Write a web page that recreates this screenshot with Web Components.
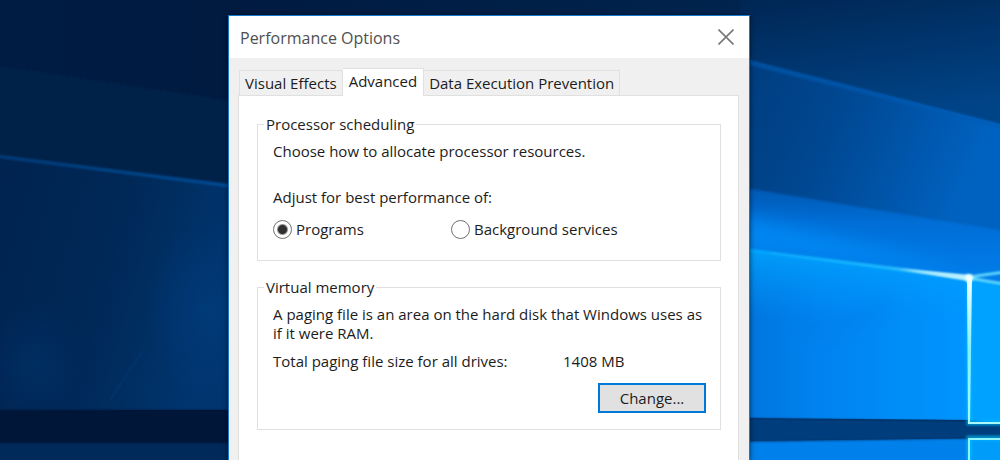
<!DOCTYPE html>
<html lang="en">
<head>
<meta charset="utf-8">
<title>Performance Options</title>
<style>
  html, body {
    height: 100%;
    margin: 0;
    overflow: hidden;
  }

  body {
    font-family: "Open Sans", "Noto Sans", sans-serif;
    font-size: 15px;
    line-height: 19px;
    color: #1c1c1c;
  }

  p {
    margin: 0;
  }

  .spaced {
    margin-top: 27px;
  }
</style>
</head>
<body>
<desktop-wallpaper>
  <dialog-window name="Performance Options">
    <tab-view tabs="Visual Effects,Advanced,Data Execution Prevention" selected="1">
      <group-box name="Processor scheduling">
        <p>Choose how to allocate processor resources.</p>
        <p class="spaced">Adjust for best performance of:</p>
        <radio-choice name="scheduling" options="Programs,Background services"></radio-choice>
      </group-box>
      <group-box name="Virtual memory">
        <p>A paging file is an area on the hard disk that Windows uses as if it were RAM.</p>
        <value-row>
          Total paging file size for all drives:
          <span slot="value">1408 MB</span>
        </value-row>
        <push-button>Change...</push-button>
      </group-box>
    </tab-view>
  </dialog-window>
</desktop-wallpaper>

<script>
// Attach an open shadow root and fill it with markup
const render = (el, html) => {
    let template = document.createElement('template');
    template.innerHTML = html;
    let shadow = el.attachShadow({mode: 'open'});
    shadow.append(template.content.cloneNode(true));
    return shadow;
};

/**
 * DesktopWallpaper
 * I paint the light beams and the window frame of
 * the desktop, and stack my children on top of them.
 */
const wallpaperTemplate = `
<style>
  :host {
    display: grid;
    grid-template-columns: 228fr 522px 250fr;
    grid-template-rows: 15px minmax(0, 1fr);
    height: 100%;
    overflow: hidden;
    background: #002048;
  }
  svg {
    grid-area: 1 / 1 / 3 / 4;
    width: 100%;
    height: 100%;
    min-height: 0;
  }
  slot {
    display: block;
    grid-area: 2 / 2 / 3 / 3;
    z-index: 1;
  }
</style>
<svg viewBox="0 0 1000 460" preserveAspectRatio="none" aria-hidden="true">
  <defs>
    <linearGradient id="sky" x1="0" x2="1" y1="0" y2="0">
      <stop offset="0" stop-color="#001c42"/>
      <stop offset=".23" stop-color="#001a40"/>
      <stop offset=".75" stop-color="#00244e"/>
      <stop offset="1" stop-color="#002b5c"/>
    </linearGradient>
    <linearGradient id="skyRight" x1="0" x2=".3" y1="0" y2="1">
      <stop offset="0" stop-color="#002653"/>
      <stop offset="1" stop-color="#004488"/>
    </linearGradient>
    <linearGradient id="leftLow" x1="0" x2="1" y1="0" y2=".3">
      <stop offset="0" stop-color="#002350"/>
      <stop offset=".5" stop-color="#002856"/>
      <stop offset="1" stop-color="#00356f"/>
    </linearGradient>
    <linearGradient id="beam" x1="0" x2="1" y1="0" y2=".3">
      <stop offset="0" stop-color="#003c7c"/>
      <stop offset=".45" stop-color="#004893"/>
      <stop offset="1" stop-color="#0062c0"/>
    </linearGradient>
    <linearGradient id="bright" x1="0" x2="0" y1="0" y2="1">
      <stop offset="0" stop-color="#0058b2"/>
      <stop offset=".35" stop-color="#006ed6"/>
      <stop offset="1" stop-color="#0080ee"/>
    </linearGradient>
    <linearGradient id="pane" x1="0" x2="1" y1="0" y2="0">
      <stop offset="0" stop-color="#0074dc"/>
      <stop offset=".35" stop-color="#0083f0"/>
      <stop offset="1" stop-color="#0096ff"/>
    </linearGradient>
    <linearGradient id="paneGlow" x1="0" x2="0" y1="0" y2="1">
      <stop offset="0" stop-color="#00a8ff" stop-opacity=".8"/>
      <stop offset=".4" stop-color="#0098ff" stop-opacity="0"/>
    </linearGradient>
    <linearGradient id="leftRay" x1="0" x2="1" y1="0" y2="0">
      <stop offset="0" stop-color="#003e7e"/>
      <stop offset="1" stop-color="#00509c"/>
    </linearGradient>
    <linearGradient id="ray" x1="0" x2="1" y1="0" y2="0">
      <stop offset="0" stop-color="#00a4ff"/>
      <stop offset=".65" stop-color="#20bcff"/>
      <stop offset=".85" stop-color="#7cdcff"/>
      <stop offset="1" stop-color="#e8ffff"/>
    </linearGradient>
    <linearGradient id="frame" x1="0" x2="0" y1="0" y2="1">
      <stop offset="0" stop-color="#f4ffff"/>
      <stop offset=".5" stop-color="#80f0ff"/>
      <stop offset="1" stop-color="#a8f8ff"/>
    </linearGradient>
    <radialGradient id="haze">
      <stop offset="0" stop-color="#003c7c" stop-opacity=".7"/>
      <stop offset="1" stop-color="#003c7c" stop-opacity="0"/>
    </radialGradient>
    <filter id="soft" filterUnits="userSpaceOnUse" x="-10" y="-10" width="1020" height="490"><feGaussianBlur stdDeviation="1"/></filter>
    <filter id="glow" filterUnits="userSpaceOnUse" x="-10" y="-10" width="1020" height="490"><feGaussianBlur stdDeviation="9"/></filter>
  </defs>
  <rect width="1000" height="460" fill="url(#sky)"/>
  <path d="M0 66 240 102V190L0 158Z" fill="#002149" filter="url(#soft)"/>
  <path d="M0 158 240 187V410H0Z" fill="url(#leftLow)"/>
  <ellipse cx="206" cy="310" rx="60" ry="90" fill="url(#haze)"/>
  <ellipse cx="35" cy="365" rx="50" ry="60" fill="url(#haze)" opacity=".5"/>
  <path d="M110 400 142 352" stroke="#00407c" stroke-width="1.5" opacity=".6" filter="url(#soft)"/>
  <path d="M-5 156 240 187" fill="none" stroke="url(#leftRay)" stroke-width="3" filter="url(#soft)"/>
  <rect x="-10" y="442" width="250" height="40" fill="#002a5a"/>
  <rect x="-10" y="410" width="250" height="33" fill="#001537" filter="url(#soft)"/>

  <path d="M740 0H1000V130L740 60Z" fill="url(#skyRight)"/>
  <path d="M740 58 1000 124V236L740 190Z" fill="url(#beam)"/>
  <path d="M740 60 1005 127" fill="none" stroke="#005cb4" stroke-width="5" opacity=".6" filter="url(#soft)"/>
  <path d="M740 187 1010 232V290H740Z" fill="url(#bright)" filter="url(#soft)"/>
  <path d="M740 216 830 236 968 270 740 250Z" fill="#0090fc" opacity=".7" filter="url(#glow)"/>
  <path d="M740 249 969 278V420L740 418Z" fill="url(#pane)"/>
  <path d="M740 249 969 278V420L740 418Z" fill="url(#paneGlow)"/>
  <path d="M802 330Q842 336 890 300" fill="none" stroke="#0070d8" stroke-width="8" opacity=".3" filter="url(#glow)"/>
  <path d="M969 278 1000 284V423H969Z" fill="#00a2ff"/>
  <path d="M740 249 969 278" fill="none" stroke="url(#ray)" stroke-width="3" filter="url(#soft)"/>
  <path d="M900 269 969 275V281Z" fill="#b8f0ff" filter="url(#soft)"/>
  <path d="M969 278 1005 284M969 277 1005 272" stroke="#70e4ff" stroke-width="2.5" filter="url(#soft)"/>
  <path d="M740 441 1000 438V460H740Z" fill="#0080ea"/>
  <path d="M969 439H1000V460H969Z" fill="#009cfa"/>
  <path d="M740 418 968 421 1010 424V438L740 442Z" fill="#003c7c" filter="url(#soft)"/>
  <path d="M969 278V423H1010M969 470V438H1010" fill="none" stroke="#00c8ff" stroke-width="5" opacity=".6" filter="url(#soft)"/>
  <path d="M967 277H972L970 422H1000V424H968Z" fill="url(#frame)"/>
  <path d="M969 460V439H1000" fill="none" stroke="#90f4ff" stroke-width="2"/>
  <circle cx="969" cy="278" r="4" fill="#f0ffff" filter="url(#soft)"/>
</svg>
<slot></slot>
`;

class DesktopWallpaper extends HTMLElement {
    constructor(){
        super();
        render(this, wallpaperTemplate);
    }
}

/**
 * DialogWindow
 * I am a window with a title bar and a close button.
 */
const dialogTemplate = `
<style>
  :host {
    display: flex;
    flex-direction: column;
    box-sizing: border-box;
    min-height: 100%;
    background: #f0f0f0;
    border: 1px solid #1878cc;
    border-bottom: 0;
    box-shadow: 0 1px 5px rgba(0, 0, 0, 0.6);
  }
  header {
    display: flex;
    align-items: center;
    justify-content: space-between;
    height: 42px;
    padding: 0 15px 0 11px;
    background: white;
  }
  h1 {
    margin: 0;
    padding-top: 2px;
    font: 16px/24px "Open Sans", "Noto Sans", sans-serif;
    color: #505050;
  }
  button {
    display: flex;
    padding: 0;
    border: 0;
    background: none;
  }
  main {
    display: flex;
    flex: 1;
    flex-direction: column;
    padding: 10px 10px 0 9px;
  }
</style>
<header>
  <h1></h1>
  <button aria-label="Close">
    <svg width="16" height="16" viewBox="0 0 16 16" fill="none" stroke="#777" stroke-width="1.6">
      <path d="M.5.5 15.5 15.5M15.5.5.5 15.5"/>
    </svg>
  </button>
</header>
<main><slot></slot></main>
`;

class DialogWindow extends HTMLElement {
    constructor(){
        super();
        this.shadow = render(this, dialogTemplate);
        this.onClose = this.onClose.bind(this);
    }

    connectedCallback(){
        this.shadow.querySelector('h1').textContent = this.getAttribute('name');
        this.shadow.querySelector('button').addEventListener('click', this.onClose);
    }

    onClose(){
        this.remove();
    }
}

/**
 * TabView
 * I show a row of tabs over one page of content.
 */
const tabTemplate = `
<style>
  :host {
    display: flex;
    flex: 1;
    flex-direction: column;
  }
  nav {
    display: flex;
    align-items: flex-end;
    padding-left: 1px;
  }
  button {
    height: 25px;
    padding: 0 5px;
    border: 1px solid #e0e0e0;
    border-bottom: 0;
    background: #f0f0f0;
    font: inherit;
    color: inherit;
    white-space: nowrap;
  }
  button + button {
    border-left: 0;
  }
  button[aria-selected="true"] {
    z-index: 1;
    height: 28px;
    margin-bottom: -1px;
    padding: 0 6px 3px;
    background: white;
  }
  section {
    display: flex;
    flex: 1;
    flex-direction: column;
    gap: 17px;
    padding: 19px 17px 0 18px;
    border: 1px solid #e0e0e0;
    border-bottom: 0;
    background: white;
  }
</style>
<nav role="tablist"></nav>
<section role="tabpanel"><slot></slot></section>
`;

class TabView extends HTMLElement {
    constructor(){
        super();
        this.shadow = render(this, tabTemplate);
    }

    connectedCallback(){
        let nav = this.shadow.querySelector('nav');
        let selected = Number(this.getAttribute('selected'));
        this.getAttribute('tabs').split(',').forEach((name, i) => {
            let tab = document.createElement('button');
            tab.setAttribute('role', 'tab');
            tab.setAttribute('aria-selected', i === selected);
            tab.textContent = name;
            nav.append(tab);
        });
    }
}

/**
 * GroupBox
 * I am a framed set of controls with a caption.
 */
const groupTemplate = `
<style>
  :host {
    display: block;
  }
  fieldset {
    min-width: 0;
    margin: 0;
    padding: 8px 14px 16px 15px;
    border: 1px solid #e0e0e0;
  }
  legend {
    margin-left: -9px;
    padding: 0 2px;
  }
</style>
<fieldset>
  <legend></legend>
  <slot></slot>
</fieldset>
`;

class GroupBox extends HTMLElement {
    constructor(){
        super();
        this.shadow = render(this, groupTemplate);
    }

    connectedCallback(){
        this.shadow.querySelector('legend').textContent = this.getAttribute('name');
    }
}

/**
 * RadioChoice
 * I am a row of radio buttons, the first one checked.
 */
const radioTemplate = `
<style>
  :host {
    display: grid;
    grid-template-columns: 178px 1fr;
    padding: 13px 0 5px;
  }
  label {
    display: flex;
    align-items: center;
    gap: 4px;
  }
  input {
    appearance: none;
    box-sizing: border-box;
    width: 19px;
    height: 19px;
    margin: 0;
    border: 1px solid #707070;
    border-radius: 50%;
    background: white;
  }
  input:checked {
    background: radial-gradient(circle, #303030 4px, white 6px);
  }
</style>
`;

class RadioChoice extends HTMLElement {
    constructor(){
        super();
        this.shadow = render(this, radioTemplate);
    }

    connectedCallback(){
        this.getAttribute('options').split(',').forEach((text, i) => {
            let label = document.createElement('label');
            let input = document.createElement('input');
            input.type = 'radio';
            input.name = this.getAttribute('name');
            input.checked = i === 0;
            label.append(input, text);
            this.shadow.append(label);
        });
    }
}

// A caption with its value in a second column
const valueTemplate = `
<style>
  :host {
    display: grid;
    grid-template-columns: 290px 1fr;
    padding: 9px 0 12px;
  }
</style>
<span><slot></slot></span>
<slot name="value"></slot>
`;

class ValueRow extends HTMLElement {
    constructor(){
        super();
        render(this, valueTemplate);
    }
}

// The default button of the dialog
const buttonTemplate = `
<style>
  :host {
    display: flex;
    justify-content: flex-end;
  }
  button {
    width: 108px;
    height: 30px;
    padding: 0;
    border: 2px solid #0078d7;
    background: #e1e1e1;
    font: inherit;
    color: inherit;
  }
</style>
<button><slot></slot></button>
`;

class PushButton extends HTMLElement {
    constructor(){
        super();
        render(this, buttonTemplate);
    }
}

window.customElements.define('desktop-wallpaper', DesktopWallpaper);
window.customElements.define('dialog-window', DialogWindow);
window.customElements.define('tab-view', TabView);
window.customElements.define('group-box', GroupBox);
window.customElements.define('radio-choice', RadioChoice);
window.customElements.define('value-row', ValueRow);
window.customElements.define('push-button', PushButton);
</script>
</body>
</html>
